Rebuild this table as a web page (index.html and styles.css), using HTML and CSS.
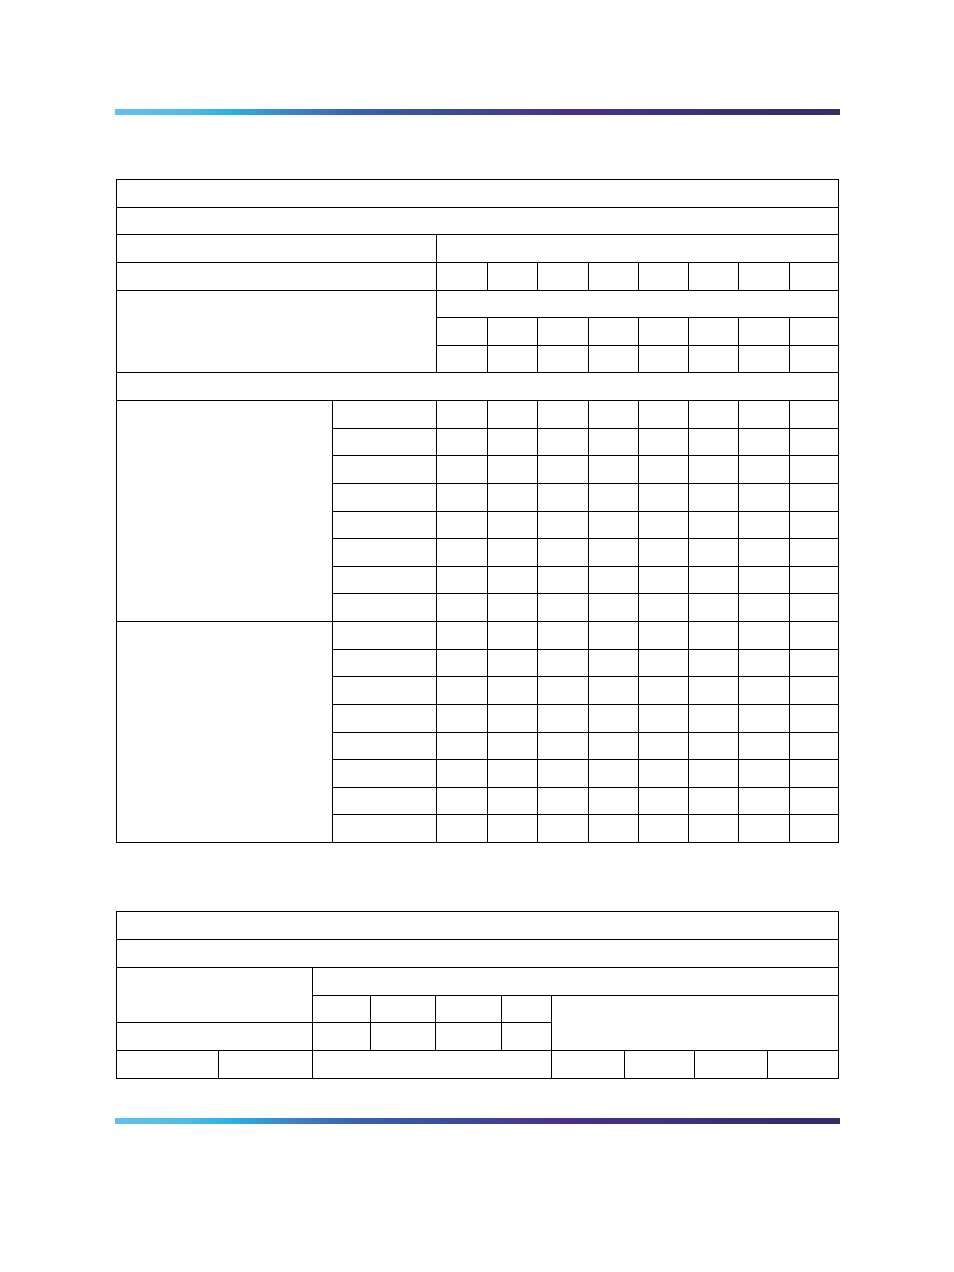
FILE: index.html
```html
<!DOCTYPE html>
<html>
<head>
<meta charset="utf-8">
<link rel="stylesheet" href="styles.css">
</head>
<body>
<div class="page">
  <div class="bar bar-top"></div>
  <div class="t1">
    <div class="c full"></div>
    <div class="c full"></div>
    <div class="c span2"></div><div class="c span8"></div>
    <div class="c span2"></div>
    <div class="c"></div><div class="c"></div><div class="c"></div><div class="c"></div><div class="c"></div><div class="c"></div><div class="c"></div><div class="c"></div>
    <div class="c span2 rows3"></div><div class="c span8"></div>
    <div class="c"></div><div class="c"></div><div class="c"></div><div class="c"></div><div class="c"></div><div class="c"></div><div class="c"></div><div class="c"></div>
    <div class="c"></div><div class="c"></div><div class="c"></div><div class="c"></div><div class="c"></div><div class="c"></div><div class="c"></div><div class="c"></div>
    <div class="c full"></div>
    <div class="c rows8"></div>
    <div class="c"></div><div class="c"></div><div class="c"></div><div class="c"></div><div class="c"></div><div class="c"></div><div class="c"></div><div class="c"></div><div class="c"></div>
    <div class="c"></div><div class="c"></div><div class="c"></div><div class="c"></div><div class="c"></div><div class="c"></div><div class="c"></div><div class="c"></div><div class="c"></div>
    <div class="c"></div><div class="c"></div><div class="c"></div><div class="c"></div><div class="c"></div><div class="c"></div><div class="c"></div><div class="c"></div><div class="c"></div>
    <div class="c"></div><div class="c"></div><div class="c"></div><div class="c"></div><div class="c"></div><div class="c"></div><div class="c"></div><div class="c"></div><div class="c"></div>
    <div class="c"></div><div class="c"></div><div class="c"></div><div class="c"></div><div class="c"></div><div class="c"></div><div class="c"></div><div class="c"></div><div class="c"></div>
    <div class="c"></div><div class="c"></div><div class="c"></div><div class="c"></div><div class="c"></div><div class="c"></div><div class="c"></div><div class="c"></div><div class="c"></div>
    <div class="c"></div><div class="c"></div><div class="c"></div><div class="c"></div><div class="c"></div><div class="c"></div><div class="c"></div><div class="c"></div><div class="c"></div>
    <div class="c"></div><div class="c"></div><div class="c"></div><div class="c"></div><div class="c"></div><div class="c"></div><div class="c"></div><div class="c"></div><div class="c"></div>
    <div class="c rows8"></div>
    <div class="c"></div><div class="c"></div><div class="c"></div><div class="c"></div><div class="c"></div><div class="c"></div><div class="c"></div><div class="c"></div><div class="c"></div>
    <div class="c"></div><div class="c"></div><div class="c"></div><div class="c"></div><div class="c"></div><div class="c"></div><div class="c"></div><div class="c"></div><div class="c"></div>
    <div class="c"></div><div class="c"></div><div class="c"></div><div class="c"></div><div class="c"></div><div class="c"></div><div class="c"></div><div class="c"></div><div class="c"></div>
    <div class="c"></div><div class="c"></div><div class="c"></div><div class="c"></div><div class="c"></div><div class="c"></div><div class="c"></div><div class="c"></div><div class="c"></div>
    <div class="c"></div><div class="c"></div><div class="c"></div><div class="c"></div><div class="c"></div><div class="c"></div><div class="c"></div><div class="c"></div><div class="c"></div>
    <div class="c"></div><div class="c"></div><div class="c"></div><div class="c"></div><div class="c"></div><div class="c"></div><div class="c"></div><div class="c"></div><div class="c"></div>
    <div class="c"></div><div class="c"></div><div class="c"></div><div class="c"></div><div class="c"></div><div class="c"></div><div class="c"></div><div class="c"></div><div class="c"></div>
    <div class="c"></div><div class="c"></div><div class="c"></div><div class="c"></div><div class="c"></div><div class="c"></div><div class="c"></div><div class="c"></div><div class="c"></div>
  </div>
  <div class="t2">
    <div class="c full2"></div>
    <div class="c full2"></div>
    <div class="c a-left rows2"></div><div class="c a-head"></div>
    <div class="c"></div><div class="c"></div><div class="c"></div><div class="c"></div><div class="c a-right rows2"></div>
    <div class="c a-left"></div>
    <div class="c"></div><div class="c"></div><div class="c"></div><div class="c"></div>
    <div class="c"></div><div class="c"></div><div class="c a-mid"></div><div class="c"></div><div class="c"></div><div class="c"></div><div class="c"></div>
  </div>
  <div class="bar bar-bottom"></div>
</div>
</body>
</html>
```
FILE: styles.css
```css
html, body {
  margin: 0;
  padding: 0;
  background: #ffffff;
  font-family: "Liberation Sans", Arial, sans-serif;
}
.page {
  width: 954px;
  height: 1272px;
  box-sizing: border-box;
  padding-top: 109px;
  padding-left: 115px;
  display: flex;
  flex-direction: column;
  align-items: flex-start;
}
.bar {
  width: 725px;
  height: 6px;
  background: linear-gradient(90deg,
    #62c0ec 0%,
    #4fbbe8 10%,
    #2ab0e2 16%,
    #3d84c6 24%,
    #3a5fad 34%,
    #3a4d9e 45%,
    #453c98 55%,
    #4a2e8e 62%,
    #40307e 78%,
    #3a2a6c 92%,
    #3b2b6a 100%);
}
.bar-bottom {
  margin-top: 39px;
}
.t1 {
  margin-top: 64px;
  margin-left: 1px;
  display: grid;
  background: #000;
  padding: 1px;
  gap: 1px;
  grid-template-columns: 215px 103px 50px 49px 50px 49px 49px 49px 50px 48px;
  grid-template-rows: repeat(24, 1fr);
  width: 723px;
  height: 664px;
  box-sizing: border-box;
}
.t2 {
  margin-top: 68px;
  margin-left: 1px;
  display: grid;
  background: #000;
  padding: 1px;
  gap: 1px;
  grid-template-columns: 101px 93px 57px 64px 65px 49px 72px 69px 72px 70px;
  grid-template-rows: repeat(6, 1fr);
  width: 723px;
  height: 168px;
  box-sizing: border-box;
}
.c {
  background: #fff;
}
.full { grid-column: 1 / -1; }
.full2 { grid-column: 1 / -1; }
.span2 { grid-column: span 2; }
.span8 { grid-column: span 8; }
.rows3 { grid-row: span 3; }
.rows8 { grid-row: span 8; }
.a-left { grid-column: span 2; }
.rows2 { grid-row: span 2; }
.a-head { grid-column: span 8; }
.a-right { grid-column: span 4; }
.a-mid { grid-column: span 4; }
```
